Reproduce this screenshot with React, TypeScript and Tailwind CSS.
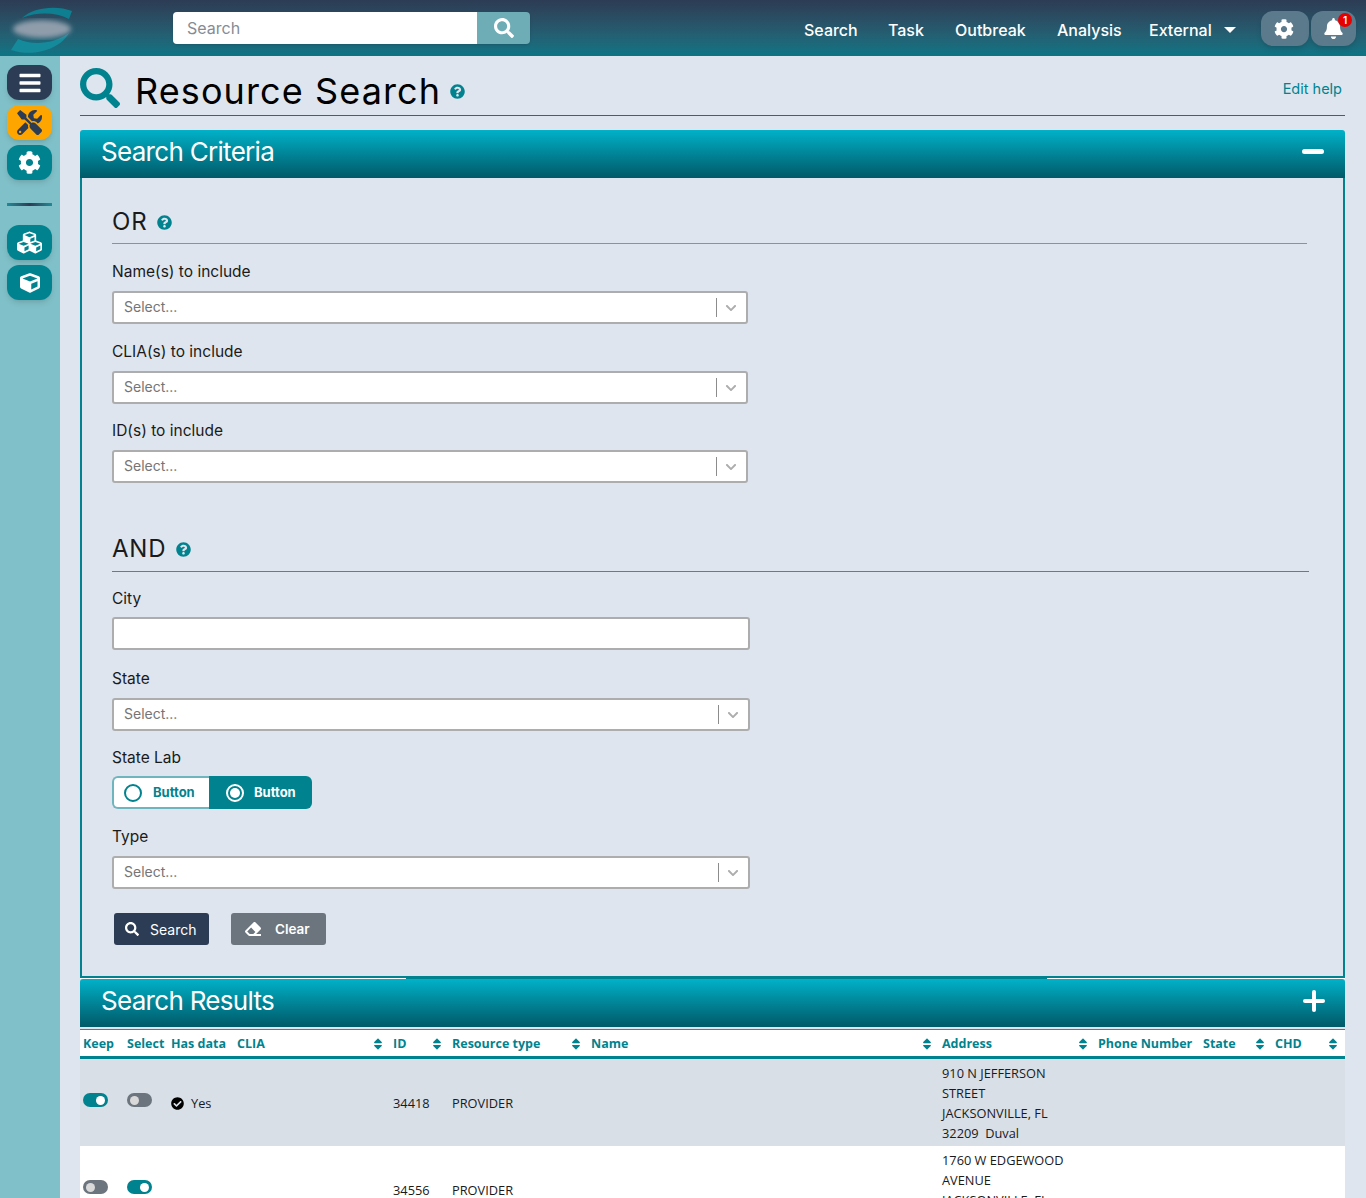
import type { ReactNode } from "react";
import {
  FaBars,
  FaBell,
  FaCheckCircle,
  FaChevronDown,
  FaCog,
  FaCube,
  FaCubes,
  FaEraser,
  FaQuestionCircle,
  FaSearch,
  FaSort,
  FaTools,
} from "react-icons/fa";

const NAV = [
  { label: "Search", cls: "w-[84px]" },
  { label: "Task", cls: "w-[67px]" },
  { label: "Outbreak", cls: "w-[102px]" },
  { label: "Analysis", cls: "w-[92px]" },
];

const COLUMNS = [
  { label: "Keep", cls: "w-[44px]", sort: false },
  { label: "Select", cls: "w-[44px]", sort: false },
  { label: "Has data", cls: "w-[66px]", sort: false },
  { label: "CLIA", cls: "w-[156px]", sort: true },
  { label: "ID", cls: "w-[59px]", sort: true },
  { label: "Resource type", cls: "w-[139px]", sort: true },
  { label: "Name", cls: "w-[351px]", sort: true },
  { label: "Address", cls: "w-[156px]", sort: true },
  { label: "Phone Number", cls: "w-[105px]", sort: false },
  { label: "State", cls: "w-[72px]", sort: true },
  { label: "CHD", cls: "w-[73px]", sort: true },
];

function SideButton({ children, className }: { children: ReactNode; className: string }) {
  return (
    <div className={`flex h-[35px] w-[45px] items-center justify-center rounded-xl text-white shadow-md ${className}`}>
      {children}
    </div>
  );
}

function Help({ className }: { className: string }) {
  return <FaQuestionCircle className={`text-[#00838f] ${className}`} />;
}

function SelectBox({ wide }: { wide?: boolean }) {
  return (
    <div className={`flex h-[33px] items-center rounded-[3px] border-2 border-[#adadad] bg-white pl-[10px] ${wide ? "w-[638px]" : "w-[636px]"}`}>
      <span className="flex-1 pb-[2px] text-[14px] text-[#757575]">Select...</span>
      <span className="h-[19px] w-px bg-[#8c8c8c]" />
      <span className="flex w-[29px] justify-center pr-[2px] text-[#adadad]">
        <FaChevronDown className="text-[12px]" />
      </span>
    </div>
  );
}

function Label({ children, className }: { children: ReactNode; className: string }) {
  return <div className={`h-[20px] text-[15.5px] leading-[22px] text-[#1a1a1a] ${className}`}>{children}</div>;
}

function PanelHeader({ title, icon }: { title: string; icon: ReactNode }) {
  return (
    <div className="flex h-[48px] items-center justify-between rounded-t-[3px] bg-gradient-to-b from-[#00b2c9] to-[#005a68] pb-[4px] pl-[21px] pr-[20px] text-white">
      <span className="text-[26px] leading-none tracking-[-0.7px]">{title}</span>
      {icon}
    </div>
  );
}

function Toggle({ on }: { on: boolean }) {
  return (
    <span className={`flex h-[14px] w-[25px] items-center rounded-full px-[3px] ${on ? "justify-end bg-[#00838f]" : "justify-start bg-[#6c757d]"}`}>
      <span className={`h-[9px] w-[9px] rounded-full ${on ? "bg-white" : "bg-[#d9d9d9]"}`} />
    </span>
  );
}

function Row({ striped, keep, select, hasData, id, address }: { striped: boolean; keep: boolean; select: boolean; hasData: boolean; id: string; address: string[] }) {
  return (
    <tr className={`text-[12.8px] leading-[20px] text-[#1a1a1a] ${striped ? "bg-[#d8dfe7]" : "bg-white"}`}>
      <td className="px-[3px]">
        <div className="mb-[5px]"><Toggle on={keep} /></div>
      </td>
      <td className="px-[3px]">
        <div className="mb-[5px]"><Toggle on={select} /></div>
      </td>
      <td className="px-[3px]">
        {hasData && (
          <span className="flex items-center gap-[7px]">
            <FaCheckCircle className="mt-[2px] text-[13px] text-black" />
            Yes
          </span>
        )}
      </td>
      <td />
      <td className="px-[3px]">{id}</td>
      <td className="px-[3px]">PROVIDER</td>
      <td />
      <td className="px-[3px] pb-[3px] pt-[4px]">
        {address.map((line) => (
          <div key={line} className="whitespace-pre">{line}</div>
        ))}
      </td>
      <td />
      <td />
      <td />
    </tr>
  );
}

export default function App() {
  return (
    <div className="h-[1198px] overflow-hidden bg-[#dee5ee] font-['Inter','Liberation_Sans',sans-serif]">
      {/* top bar */}
      <header className="flex h-[56px] items-center bg-gradient-to-b from-[#2c3c54] to-[#0a7585] pt-px">
        <div className="w-[173px] pl-[9px]">
          <svg width="70" height="50" viewBox="0 0 70 50">
            <defs>
              <filter id="logoBlur"><feGaussianBlur stdDeviation="2.5" /></filter>
            </defs>
            <path d="M13 14 C24 3 48 1 63 7 L60 15 C46 8 28 8 13 14 Z" fill="#0e7f90" />
            <path d="M2 46 L9 35 C26 43 48 38 60 29 C52 44 26 54 2 46 Z" fill="#148a9b" />
            <ellipse cx="33" cy="25" rx="29" ry="9" fill="#8f9dab" filter="url(#logoBlur)" />
          </svg>
        </div>
        <div className="-mt-[2px] flex h-[32px] w-[357px] overflow-hidden rounded-[4px] shadow-sm">
          <div className="flex w-[304px] items-center bg-white pl-[14px] text-[16px] text-[#858c94]">Search</div>
          <div className="flex w-[53px] items-center justify-center bg-[#6fadb6] text-white">
            <FaSearch className="text-[20px]" />
          </div>
        </div>
        <nav className="ml-[274px] mt-[2px] flex items-center text-[16px] font-medium text-white">
          {NAV.map((item) => (
            <span key={item.label} className={item.cls}>{item.label}</span>
          ))}
          <span className="w-[75px]">External</span>
          <span className="h-0 w-0 border-x-[6px] border-t-[6px] border-x-transparent border-t-white" />
        </nav>
        <div className="ml-[25px] flex gap-[2px]">
          <div className="flex h-[35px] w-[48px] items-center justify-center rounded-xl bg-[#5b7a8b] pr-[2px] text-white shadow-md">
            <FaCog className="text-[20px]" />
          </div>
          <div className="relative flex h-[35px] w-[45px] items-center justify-center rounded-xl bg-[#5b7a8b] text-white shadow-md">
            <FaBell className="text-[21px]" />
            <span className="absolute right-[4px] top-[2px] flex h-[14px] w-[14px] items-center justify-center rounded-full bg-[#e60000] text-[10px] font-semibold leading-none">1</span>
          </div>
        </div>
      </header>

      <div className="flex">
        {/* left rail */}
        <aside className="flex h-[1142px] w-[60px] shrink-0 flex-col gap-[5px] bg-[#80c0c8] pl-[7px] pt-[9px]">
          <SideButton className="bg-[#2c3c54]"><FaBars className="text-[24px]" /></SideButton>
          <SideButton className="bg-[#ffa500]"><FaTools className="text-[25px] text-[#2c3c54]" /></SideButton>
          <SideButton className="bg-[#00838f]"><FaCog className="text-[23px]" /></SideButton>
          <div className="mb-[14px] mt-[18px] h-[3px] w-[45px] bg-gradient-to-r from-[#1f8a98] via-[#2c3c54] to-[#1f8a98]" />
          <SideButton className="bg-[#00838f]"><FaCubes className="text-[25px]" /></SideButton>
          <SideButton className="bg-[#00838f]"><FaCube className="text-[20px]" /></SideButton>
        </aside>

        <main className="ml-[20px] w-[1265px]">
          {/* page title */}
          <div className="flex h-[60px] items-center border-b border-[#14747f]">
            <FaSearch className="mt-[4px] text-[40px] text-[#00838f]" />
            <h1 className="ml-[15px] mt-[10px] text-[36px] font-normal leading-none tracking-[1.1px] text-black">Resource Search</h1>
            <Help className="ml-[9px] mt-[12px] text-[15px]" />
            <a className="ml-auto mr-[3px] mt-[7px] text-[14.5px] text-[#00838f]">Edit help</a>
          </div>

          {/* search criteria */}
          <section className="mt-[14px]">
            <PanelHeader title="Search Criteria" icon={<span className="mb-px mr-px h-[5px] w-[22px] rounded-full bg-white" />} />
            <div className="h-[800px] border-x-2 border-b-2 border-[#00838f] pl-[30px] pr-[36px]">
              <div className="flex h-[66px] items-center border-b border-[#7a9aa3] pt-[23px] text-[24px] tracking-[0.8px] text-[#1a1a1a]">
                OR
                <Help className="ml-[10px] text-[15px]" />
              </div>
              <Label className="mt-[17px]">Name(s) to include</Label>
              <div className="mt-[10px]"><SelectBox /></div>
              <Label className="mt-[17px]">CLIA(s) to include</Label>
              <div className="mt-[10px]"><SelectBox /></div>
              <Label className="mt-[16px]">ID(s) to include</Label>
              <div className="mt-[10px]"><SelectBox /></div>

              <div className="-mr-[2px] mt-[37px] flex h-[52px] items-center border-b border-[#1f9aa8] pt-[6px] text-[24px] tracking-[0.8px] text-[#1a1a1a]">
                AND
                <Help className="ml-[10px] mt-[2px] text-[15px]" />
              </div>
              <Label className="mt-[16px]">City</Label>
              <div className="mt-[9px] h-[33px] w-[638px] rounded-[3px] border-2 border-[#adadad] bg-white" />
              <Label className="mt-[18px]">State</Label>
              <div className="mt-[10px]"><SelectBox wide /></div>
              <Label className="mt-[16px]">State Lab</Label>
              <div className="mt-[9px] flex h-[33px] w-[200px] text-[13px] font-bold">
                <div className="flex w-[97px] items-center gap-[11px] rounded-l-[6px] border-2 border-r-0 border-[#6fb5bd] bg-white pl-[10px] text-[#00838f]">
                  <span className="h-[18px] w-[18px] rounded-full border-2 border-[#00838f]" />
                  Button
                </div>
                <div className="flex w-[103px] items-center gap-[10px] rounded-r-[6px] bg-[#00838f] pl-[17px] text-white">
                  <span className="flex h-[18px] w-[18px] items-center justify-center rounded-full border-2 border-white">
                    <span className="h-[10px] w-[10px] rounded-full bg-white" />
                  </span>
                  Button
                </div>
              </div>
              <Label className="mt-[17px]">Type</Label>
              <div className="mt-[10px]"><SelectBox wide /></div>
              <div className="ml-[2px] mt-[24px] flex gap-[22px] text-[14px] text-white">
                <button type="button" className="flex h-[32px] w-[95px] items-center gap-[11px] rounded-[3px] bg-[#2c3c54] pl-[11px]">
                  <FaSearch className="text-[14px]" />
                  Search
                </button>
                <button type="button" className="flex h-[32px] w-[95px] items-center gap-[14px] rounded-[3px] bg-[#6c757d] pl-[14px] text-[13.5px] font-semibold">
                  <FaEraser className="text-[16px]" />
                  Clear
                </button>
              </div>
            </div>
          </section>

          {/* search results */}
          <section>
            <div className="flex h-px">
              <span className="w-[326px] bg-white" />
              <span className="w-[641px] bg-[#00838f]" />
              <span className="flex-1 bg-white" />
            </div>
            <PanelHeader
              title="Search Results"
              icon={<span className="relative h-[22px] w-[22px] before:absolute before:left-[9px] before:top-0 before:h-[22px] before:w-[4px] before:rounded-full before:bg-white after:absolute after:left-0 after:top-[9px] after:h-[4px] after:w-[22px] after:rounded-full after:bg-white" />}
            />
            <table className="mt-[2px] w-full table-fixed border-collapse border-t border-[#2f8a96] bg-white font-['Open_Sans','Liberation_Sans',sans-serif]">
              <colgroup>
                {COLUMNS.map((col) => (
                  <col key={col.label} className={col.cls} />
                ))}
              </colgroup>
              <thead>
                <tr className="h-[28px] border-b-[3px] border-[#00838f] text-[12.5px] font-bold text-[#00838f]">
                  {COLUMNS.map((col) => (
                    <th key={col.label} className="px-[3px] pt-[2px] text-left font-bold">
                      <span className="flex items-center justify-between whitespace-nowrap">
                        {col.label}
                        {col.sort && <FaSort className="mr-[2px] text-[14px]" />}
                      </span>
                    </th>
                  ))}
                </tr>
              </thead>
              <tbody>
                <Row
                  striped
                  keep
                  select={false}
                  hasData
                  id="34418"
                  address={["910 N JEFFERSON", "STREET", "JACKSONVILLE, FL", "32209  Duval"]}
                />
                <Row
                  striped={false}
                  keep={false}
                  select
                  hasData={false}
                  id="34556"
                  address={["1760 W EDGEWOOD", "AVENUE", "JACKSONVILLE, FL", "32208  Duval"]}
                />
              </tbody>
            </table>
          </section>
        </main>
      </div>
    </div>
  );
}
